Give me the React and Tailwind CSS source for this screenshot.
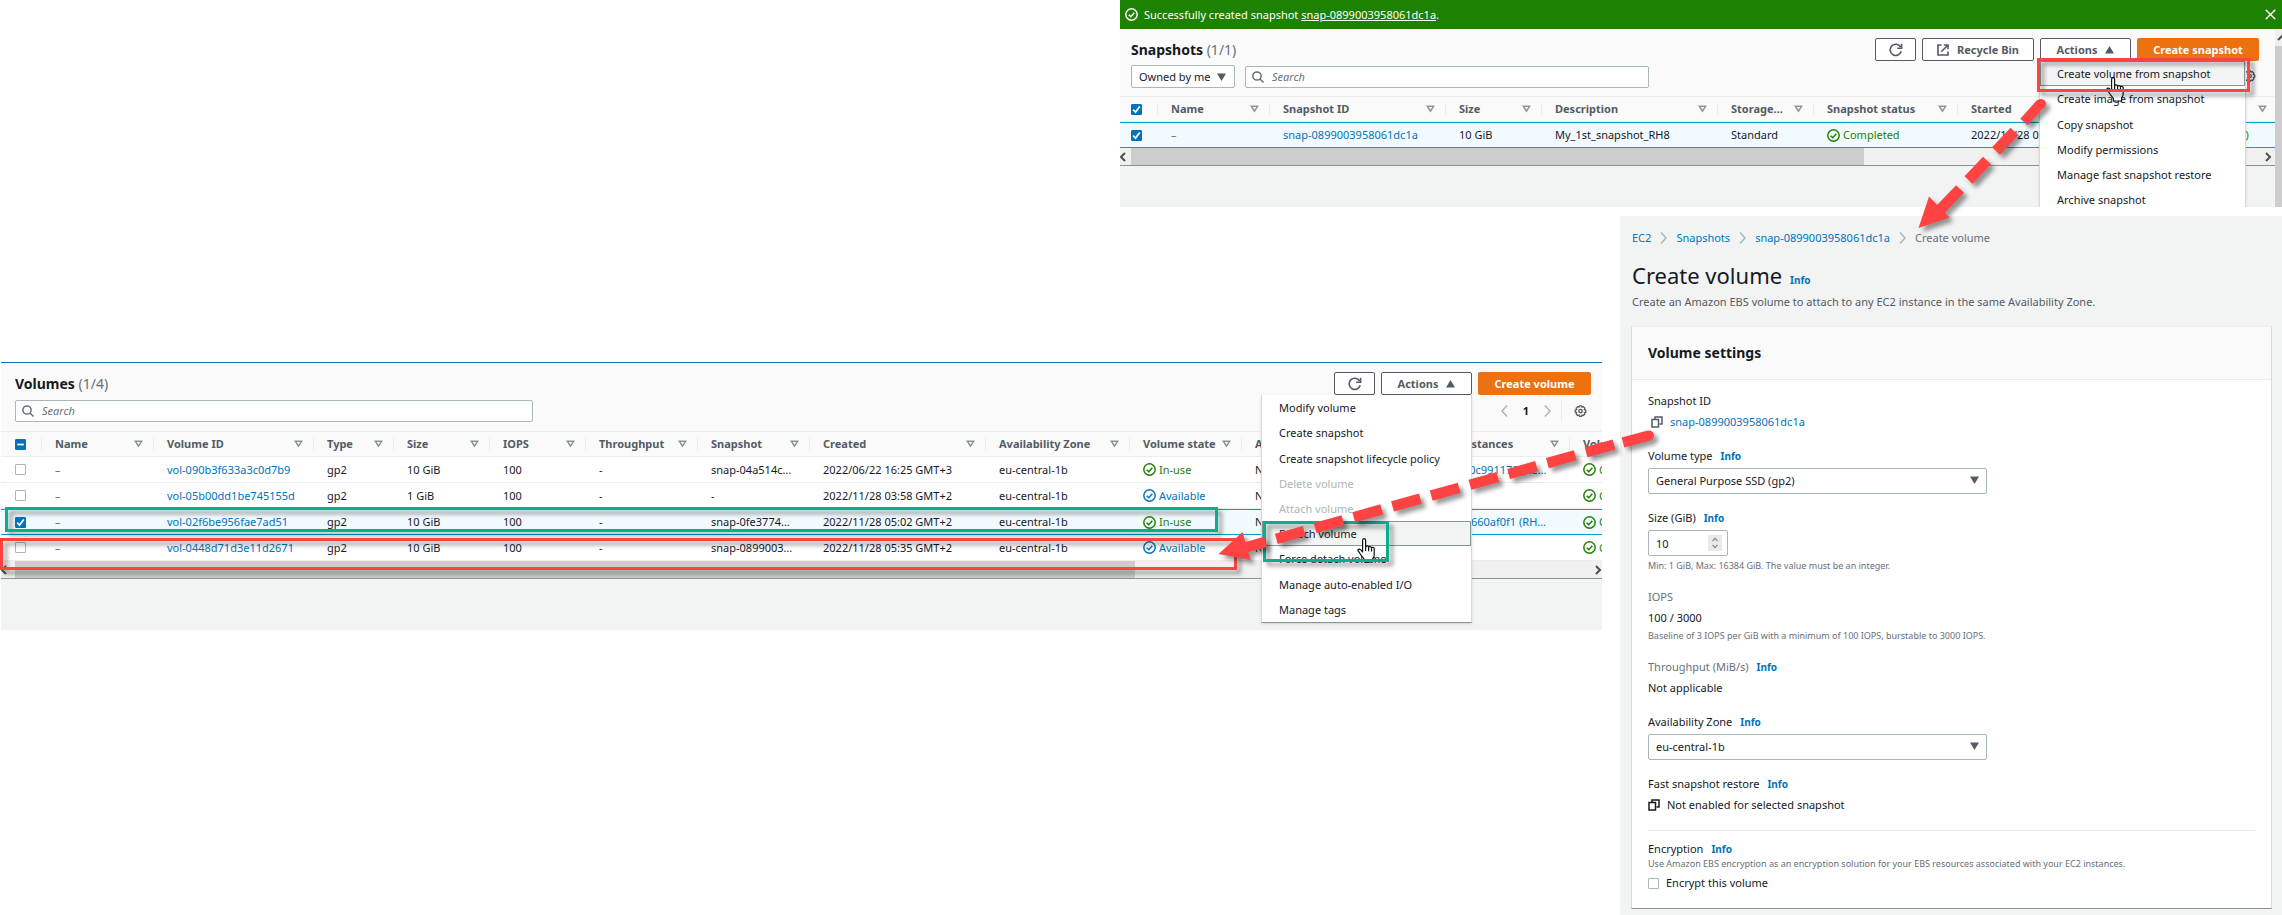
import React from "react";

const LINK = "text-[#0073bb] hover:underline";

function CheckCircle({ className = "" }) {
  return (
    <svg viewBox="0 0 16 16" className={`size-[13px] shrink-0 ${className}`} fill="none" stroke="currentColor" strokeWidth="1.8" aria-hidden="true">
      <circle cx="8" cy="8" r="7" />
      <path d="M4.6 8.2l2.5 2.5 4.4-4.9" />
    </svg>
  );
}

function SortIcon() {
  return (
    <svg viewBox="0 0 9 8" className="h-2 w-[9px] shrink-0" fill="none" stroke="#879596" strokeWidth="1.5" aria-hidden="true">
      <path d="M1.3 1.2h6.4L4.5 6.2z" />
    </svg>
  );
}

function Triangle({ up = false, className = "" }) {
  return (
    <svg viewBox="0 0 9 8" className={`h-2 w-[9px] shrink-0 ${className}`} fill="#545b64" aria-hidden="true">
      <path d={up ? "M0 7.5h9L4.5 0z" : "M0 0.5h9L4.5 8z"} />
    </svg>
  );
}

function SearchIcon() {
  return (
    <svg viewBox="0 0 12 12" className="pointer-events-none size-3 shrink-0" fill="none" stroke="#687078" strokeWidth="1.5" aria-hidden="true">
      <circle cx="5" cy="5" r="4.1" />
      <path d="M8 8l3.5 3.5" />
    </svg>
  );
}

function RefreshIcon() {
  return (
    <svg viewBox="0 0 14 14" className="size-[14px]" fill="none" stroke="#545b64" strokeWidth="1.6" aria-hidden="true">
      <path d="M12.2 8.2A5.6 5.6 0 1 1 11.6 4" />
      <path d="M12.6 0.8v4.4H8.2" />
    </svg>
  );
}

function ExternalIcon() {
  return (
    <svg viewBox="0 0 12 12" className="size-3" fill="none" stroke="#545b64" strokeWidth="1.6" aria-hidden="true">
      <path d="M4.5 1H1v10h10V7.5" />
      <path d="M6.8 1H11v4.2M11 1L4.2 7.8" />
    </svg>
  );
}

function GearIcon() {
  return (
    <svg viewBox="0 0 16 16" className="size-[13px]" fill="none" stroke="#545b64" strokeWidth="1.6" strokeLinejoin="round" aria-hidden="true">
      <path d="M6.7 1h2.6l.5 1.700 1.700-.7 1.900 1.900-.7 1.700 1.800.6v2.600l-1.800.6.7 1.700-1.900 1.900-1.700-.7-.5 1.700H6.700l-.5-1.700-1.700.7-1.900-1.900.7-1.700-1.800-.6V6.200l1.800-.6-.7-1.700 1.900-1.900 1.700.7z" />
      <circle cx="8" cy="7.500" r="2.200" />
    </svg>
  );
}

function CopyIcon({ className = "" }) {
  return (
    <svg viewBox="0 0 12 12" className={`size-3 shrink-0 ${className}`} fill="none" stroke="currentColor" strokeWidth="1.5" aria-hidden="true">
      <path d="M4 3V1h7v7H8.500" />
      <path d="M1 3.500h6.500V11H1z" />
    </svg>
  );
}

function Chevron({ left = false, className = "" }) {
  return (
    <svg viewBox="0 0 7 12" className={`h-3 w-[7px] shrink-0 ${className}`} fill="none" stroke="currentColor" strokeWidth="1.500" aria-hidden="true">
      <path d={left ? "M6 0.500L1 6l5 5.500" : "M1 0.500L6 6l-5 5.500"} />
    </svg>
  );
}

function HandCursor({ className = "" }) {
  return (
    <svg viewBox="0 0 20 25" className={`pointer-events-none h-[25px] w-5 ${className}`} fill="#fff" stroke="#111" strokeWidth="1.200" strokeLinejoin="round" aria-hidden="true">
      <path d="M5.600 2.200c0-2 3-2 3 0V9c.2-1.500 3-1.400 3 .4.300-1.300 2.900-1.100 2.900.7.400-1.200 2.700-.9 2.700.9v6.200c0 1.500-.9 2.500-1.600 3.800V24H7.400v-2.500C5.700 19.300 4 17.300 2.800 15.300 1.900 14 .9 12.900.9 12c.5-1.500 2.300-1 3.200.1l1.500 1.900z" />
      <path d="M8.600 9v4M11.600 9.500v3.700M14.500 10.200v3.200" fill="none" />
    </svg>
  );
}

function Checkbox({ checked = false, mixed = false, label, id }) {
  return (
    <span className="relative block size-[11px]">
      <input
        type="checkbox"
        id={id}
        aria-label={label}
        defaultChecked={checked || mixed}
        className="peer block size-[11px] appearance-none rounded-[1px] border border-[#aab7b8] bg-white checked:border-[#0073bb] checked:bg-[#0073bb]"
      />
      <svg viewBox="0 0 11 11" className="pointer-events-none absolute inset-0 hidden peer-checked:block" fill="none" stroke="#fff" strokeWidth="1.700" aria-hidden="true">
        <path d={mixed ? "M2.200 5.500h6.600" : "M2.200 5.600l2.300 2.500 4.300-5.600"} />
      </svg>
    </span>
  );
}

function Button({ children, className = "", ...rest }) {
  return (
    <button type="button" className={`flex h-[23px] items-center justify-center gap-2 rounded-[2px] border border-[#545b64] bg-white text-[11px] font-bold text-[#545b64] ${className}`} {...rest}>
      {children}
    </button>
  );
}

function PrimaryButton({ children, className = "" }) {
  return (
    <button type="button" className={`h-[23px] rounded-[2px] bg-[#ec7211] text-[11px] font-bold text-white ${className}`}>
      {children}
    </button>
  );
}

function SearchBox({ label, className = "" }) {
  return (
    <label className={`flex h-[22px] items-center gap-2 rounded-[2px] border border-[#aab7b8] bg-white px-[6px] ${className}`}>
      <SearchIcon />
      <input type="search" aria-label={label} placeholder="Search" className="min-w-0 flex-1 bg-transparent outline-none placeholder:italic placeholder:text-[#687078]" />
    </label>
  );
}

function Menu({ items, active, disabled = [], className = "" }) {
  return (
    <ul role="menu" className={`absolute z-10 border border-t-0 border-[#d5dbdb] border-b-[#879596] bg-white shadow-sm ${className}`}>
      {items.map((item, i) => (
        <li key={item} role="none" className="nth-[5n+3]:pt-px">
          <button
            type="button"
            role="menuitem"
            disabled={disabled.includes(i)}
            className={`flex h-[25px] w-full items-center border px-4 text-left ${
              i === active ? "border-[#879596] bg-[#f2f3f3]" : "border-transparent"
            } ${disabled.includes(i) ? "text-[#aab7b8]" : "text-[#16191f]"}`}
          >
            {item}
          </button>
        </li>
      ))}
    </ul>
  );
}

function Status({ color, children }) {
  return (
    <span className={`flex items-center gap-[3px] ${color}`}>
      <CheckCircle />
      {children}
    </span>
  );
}

function HeaderCell({ children }) {
  return (
    <th scope="col" className="h-[25px] border-b border-[#eaeded] p-0 text-left font-bold text-[#545b64]">
      <div className="flex h-3 items-center justify-between border-r border-[#eaeded] pl-[13px] pr-[10px]">
        <span className="whitespace-nowrap leading-3">{children}</span>
        <SortIcon />
      </div>
    </th>
  );
}

function Scrollbar({ thumb, end }) {
  return (
    <div className="flex h-[17px] items-center bg-[#f0f0f0] text-[#505050]">
      <svg viewBox="0 0 10 10" className="mr-1 h-[10px] w-[10px]" fill="none" stroke="currentColor" strokeWidth="2" aria-hidden="true">
        <path d="M5 1L1 5l4 4" />
      </svg>
      <div className={`h-full bg-[#cdcdcd] ${thumb}`} />
      <svg viewBox="0 0 10 10" className={`ml-auto h-[10px] w-[10px] ${end}`} fill="none" stroke="currentColor" strokeWidth="2" aria-hidden="true">
        <path d="M4 1l4 4-4 4" />
      </svg>
    </div>
  );
}

function Highlight({ color, className = "" }) {
  return <div className={`pointer-events-none absolute z-20 border-[3px] drop-shadow-[4px_4px_2px_rgba(0,0,0,0.4)] ${color} ${className}`} />;
}

function SnapshotsPanel() {
  const cell = "h-[26px] border-y border-[#00a1c9] bg-[#f1faff] p-0 pl-[13px] whitespace-nowrap";
  return (
    <section className="relative ml-auto w-[1162px] overflow-hidden bg-[#f2f3f3]">
      <div className="flex h-[29px] items-center gap-[6px] bg-[#1d8102] pl-[5px] pr-[6px] text-white">
        <CheckCircle />
        <p className="flex-1">
          Successfully created snapshot <a href="#snapshot" className="underline">snap-0899003958061dc1a</a>.
        </p>
        <button type="button" aria-label="Dismiss">
          <svg viewBox="0 0 11 11" className="size-[11px]" stroke="currentColor" strokeWidth="1.400" aria-hidden="true">
            <path d="M0.700 0.700l9.600 9.600M10.300 0.700L0.700 10.300" />
          </svg>
        </button>
      </div>
      <div className="flex">
        <div className="min-w-0 flex-1 pb-[41px]">
          <header className="flex flex-col gap-1 border-b border-[#eaeded] bg-[#fafafa] pb-2 pl-[11px] pr-4 pt-[9px]">
            <div className="flex items-center gap-[6px]">
              <h2 className="mr-auto text-[14px] font-bold leading-5">
                Snapshots <span className="font-normal text-[#687078]">(1/1)</span>
              </h2>
              <Button aria-label="Refresh" className="w-[41px]"><RefreshIcon /></Button>
              <Button className="w-28"><ExternalIcon />Recycle Bin</Button>
              <div className="relative">
                <Button className="w-[91px]">Actions<Triangle up /></Button>
                <Menu
                  className="-left-px top-full w-[207px]"
                  active={0}
                  items={["Create volume from snapshot", "Create image from snapshot", "Copy snapshot", "Modify permissions", "Manage fast snapshot restore", "Archive snapshot"]}
                />
                <HandCursor className="absolute left-[66px] top-[39px] z-10" />
                <Highlight color="border-[#ff4343]" className="-left-[3px] top-5 h-[34px] w-[213px]" />
              </div>
              <PrimaryButton className="w-[122px]">Create snapshot</PrimaryButton>
            </div>
            <div className="flex items-center gap-[10px]">
              <div className="relative">
                <select aria-label="Owner filter" className="h-[23px] w-[104px] appearance-none rounded-[2px] border border-[#aab7b8] bg-white pl-[7px]">
                  <option>Owned by me</option>
                </select>
                <Triangle className="pointer-events-none absolute right-[9px] top-2" />
              </div>
              <SearchBox label="Search snapshots" className="w-[404px]" />
              <button type="button" aria-label="Preferences" className="ml-auto mr-[3px]"><GearIcon /></button>
            </div>
          </header>
          <div className="overflow-hidden">
            <table className="w-[1158px] table-fixed border-separate border-spacing-0">
              <colgroup>
                <col className="w-[38px]" />
                <col className="w-[112px]" />
                <col className="w-[176px]" />
                <col className="w-[96px]" />
                <col className="w-[176px]" />
                <col className="w-[96px]" />
                <col className="w-[144px]" />
                <col className="w-[178px]" />
                <col className="w-[142px]" />
              </colgroup>
              <thead className="bg-[#fafafa]">
                <tr>
                  <th scope="col" className="h-[25px] border-b border-[#eaeded] p-0">
                    <div className="flex h-3 items-center border-r border-[#eaeded] pl-[11px]">
                      <Checkbox checked label="Select all snapshots" />
                    </div>
                  </th>
                  {["Name", "Snapshot ID", "Size", "Description", "Storage…", "Snapshot status", "Started", "Progress"].map((h) => (
                    <HeaderCell key={h}>{h}</HeaderCell>
                  ))}
                </tr>
              </thead>
              <tbody>
                <tr>
                  <td className="h-[26px] border-y border-[#00a1c9] bg-[#f1faff] p-0 pl-[11px]"><Checkbox checked label="Select snapshot" /></td>
                  <td className={`${cell} text-[#687078]`}>–</td>
                  <td className={cell}><a href="#snapshot" className={LINK}>snap-0899003958061dc1a</a></td>
                  <td className={cell}>10 GiB</td>
                  <td className={cell}>My_1st_snapshot_RH8</td>
                  <td className={cell}>Standard</td>
                  <td className={cell}><Status color="text-[#1d8102]">Completed</Status></td>
                  <td className={cell}>2022/11/28 05:26</td>
                  <td className={cell}><Status color="text-[#1d8102]">Available (100%)</Status></td>
                </tr>
              </tbody>
            </table>
          </div>
          <div className="border-b border-[#879596]">
            <Scrollbar thumb="ml-[-3px] w-[733px]" end="mr-[3px]" />
          </div>
        </div>
        <div className="flex w-[7px] flex-col bg-[#cdcdcd]">
          <div className="h-[17px] overflow-hidden bg-[#f0f0f0] text-[#505050]">
            <svg viewBox="0 0 10 17" className="ml-[2px] h-[17px] w-[10px]" fill="none" stroke="currentColor" strokeWidth="2" aria-hidden="true">
              <path d="M1 11l4-4 4 4" />
            </svg>
          </div>
        </div>
      </div>
    </section>
  );
}

const VOLUMES = [
  { id: "vol-090b3f633a3c0d7b9", size: "10 GiB", snap: "snap-04a514c…", created: "2022/06/22 16:25 GMT+3", used: true, inst: "i-0a7cde4140c991172 (Re…" },
  { id: "vol-05b00dd1be745155d", size: "1 GiB", snap: "-", created: "2022/11/28 03:58 GMT+2", used: false, inst: "" },
  { id: "vol-02f6be956fae7ad51", size: "10 GiB", snap: "snap-0fe3774…", created: "2022/11/28 05:02 GMT+2", used: true, inst: "i-03b1d2947660af0f1 (RH…", selected: true },
  { id: "vol-0448d71d3e11d2671", size: "10 GiB", snap: "snap-0899003…", created: "2022/11/28 05:35 GMT+2", used: false, inst: "" },
];

function VolumesPanel() {
  return (
    <section className="relative ml-px mt-[146px] min-w-0 flex-1 self-start border-t border-[#0073bb] bg-[#f2f3f3] pb-[51px]">
      <header className="flex flex-col gap-[5px] border-b border-[#eaeded] bg-[#fafafa] pb-[9px] pl-[14px] pr-[11px] pt-[9px]">
        <div className="flex items-center gap-[6px]">
          <h2 className="mr-auto text-[14px] font-bold leading-5">
            Volumes <span className="font-normal text-[#687078]">(1/4)</span>
          </h2>
          <Button aria-label="Refresh" className="w-[41px]"><RefreshIcon /></Button>
          <div className="relative">
            <Button className="w-[91px]">Actions<Triangle up /></Button>
            <Menu
              className="right-0 top-full w-[211px]"
              active={5}
              disabled={[3, 4]}
              items={["Modify volume", "Create snapshot", "Create snapshot lifecycle policy", "Delete volume", "Attach volume", "Detach volume", "Force detach volume", "Manage auto-enabled I/O", "Manage tags"]}
            />
            <HandCursor className="absolute -left-6 top-[166px] z-10" />
            <Highlight color="border-[#0aad8e]" className="right-[83px] top-[149px] h-[41px] w-[126px]" />
          </div>
          <PrimaryButton className="w-[113px]">Create volume</PrimaryButton>
        </div>
        <div className="flex items-center">
          <SearchBox label="Search volumes" className="w-[518px]" />
          <div className="ml-auto flex items-center text-[#aab7b8]">
            <button type="button" aria-label="Previous page"><Chevron left /></button>
            <span className="w-9 text-center font-bold text-[#16191f]">1</span>
            <button type="button" aria-label="Next page"><Chevron /></button>
            <button type="button" aria-label="Preferences" className="ml-[10px] flex h-[22px] items-center border-l border-[#eaeded] pl-3 pr-1"><GearIcon /></button>
          </div>
        </div>
      </header>
      <div className="overflow-hidden">
        <table className="w-[1681px] table-fixed border-separate border-spacing-0 bg-white">
          <colgroup>
            <col className="w-[41px]" />
            <col className="w-[112px]" />
            <col className="w-[160px]" />
            <col className="w-[80px]" />
            <col className="w-[96px]" />
            <col className="w-[96px]" />
            <col className="w-[112px]" />
            <col className="w-[112px]" />
            <col className="w-[176px]" />
            <col className="w-[144px]" />
            <col className="w-[112px]" />
            <col className="w-[152px]" />
            <col className="w-[176px]" />
            <col className="w-[112px]" />
          </colgroup>
          <thead className="bg-[#fafafa]">
            <tr>
              <th scope="col" className="h-[25px] border-b border-[#eaeded] p-0">
                <div className="flex h-3 items-center border-r border-[#eaeded] pl-[14px]">
                  <Checkbox mixed label="Select all volumes" />
                </div>
              </th>
              {["Name", "Volume ID", "Type", "Size", "IOPS", "Throughput", "Snapshot", "Created", "Availability Zone", "Volume state", "Alarm status", "Attached Instances", "Volume status"].map((h) => (
                <HeaderCell key={h}>{h}</HeaderCell>
              ))}
            </tr>
          </thead>
          <tbody>
            {VOLUMES.map((v) => {
              const line = v.selected ? "border-y border-[#00a1c9] bg-[#f1faff]" : "border-b border-[#eaeded]";
              const cell = `h-[26px] p-0 pl-[13px] whitespace-nowrap ${line}`;
              return (
                <tr key={v.id}>
                  <td className={`h-[26px] p-0 pl-[14px] ${line}`}><Checkbox checked={v.selected} label={`Select ${v.id}`} /></td>
                  <td className={`${cell} text-[#687078]`}>–</td>
                  <td className={cell}><a href={`#${v.id}`} className={LINK}>{v.id}</a></td>
                  <td className={cell}>gp2</td>
                  <td className={cell}>{v.size}</td>
                  <td className={cell}>100</td>
                  <td className={cell}>-</td>
                  <td className={cell}>{v.snap}</td>
                  <td className={cell}>{v.created}</td>
                  <td className={cell}>eu-central-1b</td>
                  <td className={cell}>
                    {v.used ? <Status color="text-[#1d8102]">In-use</Status> : <Status color="text-[#0073bb]">Available</Status>}
                  </td>
                  <td className={cell}>No alarms</td>
                  <td className={cell}><a href="#instance" className={LINK}>{v.inst}</a></td>
                  <td className={cell}><Status color="text-[#1d8102]">Okay</Status></td>
                </tr>
              );
            })}
          </tbody>
        </table>
      </div>
      <div className="border-b border-[#879596]">
        <Scrollbar thumb="w-[1120px]" end="" />
      </div>
      <Highlight color="border-[#0aad8e]" className="left-1 top-36 h-[25px] w-[1213px]" />
      <Highlight color="border-[#ff4343]" className="-left-px top-[175px] h-8 w-[1237px]" />
    </section>
  );
}

function Info() {
  return <a href="#info" className="text-[10px] font-bold text-[#0073bb]">Info</a>;
}

function FieldLabel({ htmlFor, muted = false, info = true, children }) {
  const Tag = htmlFor ? "label" : "span";
  return (
    <div className={`flex h-4 items-center gap-2 ${muted ? "text-[#687078]" : ""}`}>
      <Tag htmlFor={htmlFor}>{children}</Tag>
      {info && <Info />}
    </div>
  );
}

function SelectField({ id, value }) {
  return (
    <div className="relative mt-1 w-[339px]">
      <select id={id} className="block h-[26px] w-full appearance-none rounded-[2px] border border-[#aab7b8] bg-white pl-[7px]">
        <option>{value}</option>
      </select>
      <Triangle className="pointer-events-none absolute right-2 top-2" />
    </div>
  );
}

function CreateVolumePanel() {
  const hint = "text-[9px] leading-[14px] text-[#687078]";
  return (
    <section className="w-[662px] shrink-0 bg-[#f2f3f3] pb-[7px] pl-[11px] pr-[10px] pt-3">
      <div className="pl-px">
        <nav aria-label="Breadcrumb" className="flex h-5 items-center gap-[9px] text-[#aab7b8]">
          <a href="#ec2" className={LINK}>EC2</a>
          <Chevron />
          <a href="#snapshots" className={LINK}>Snapshots</a>
          <Chevron />
          <a href="#snapshot" className={LINK}>snap-0899003958061dc1a</a>
          <Chevron />
          <span className="text-[#687078]">Create volume</span>
        </nav>
        <div className="mt-[11px] flex h-8 items-baseline gap-2">
          <h1 className="text-[22px] leading-8">Create volume</h1>
          <Info />
        </div>
        <p className="mt-px h-5 leading-5 text-[#545b64]">Create an Amazon EBS volume to attach to any EC2 instance in the same Availability Zone.</p>
      </div>

      <div className="mt-[14px] border border-[#d5dbdb] border-b-[#879596] border-t-[#eaeded] bg-white">
        <h2 className="flex h-[53px] items-center border-b border-[#eaeded] bg-[#fafafa] px-4 text-[14px] font-bold">Volume settings</h2>
        <div className="px-4 pb-[17px] pt-[13px]">
          <FieldLabel info={false}>Snapshot ID</FieldLabel>
          <div className="mt-[3px] flex h-5 items-center gap-[7px] pl-[3px]">
            <CopyIcon className="text-[#545b64]" />
            <a href="#snapshot" className={LINK}>snap-0899003958061dc1a</a>
          </div>

          <div className="mt-4">
            <FieldLabel htmlFor="volume-type">Volume type</FieldLabel>
            <SelectField id="volume-type" value="General Purpose SSD (gp2)" />
          </div>

          <div className="mt-4">
            <FieldLabel htmlFor="size">Size (GiB)</FieldLabel>
            <div className="relative mt-1 w-20">
              <input
                id="size"
                type="number"
                defaultValue={10}
                className="block h-[26px] w-full rounded-[2px] border border-[#aab7b8] bg-white pl-[7px] [appearance:textfield]"
              />
              <span className="pointer-events-none absolute right-[6px] top-[5px] flex h-4 w-[14px] items-center justify-center bg-[#e9e9ed]">
                <svg viewBox="0 0 8 12" className="h-3 w-2" fill="none" stroke="#8f8f9d" strokeWidth="1.300" aria-hidden="true">
                  <path d="M1.500 4L4 1.500 6.500 4M1.500 8L4 10.500 6.500 8" />
                </svg>
              </span>
            </div>
            <p className={`mt-[3px] ${hint}`}>Min: 1 GiB, Max: 16384 GiB. The value must be an integer.</p>
          </div>

          <div className="mt-4">
            <FieldLabel muted info={false}>IOPS</FieldLabel>
            <p className="mt-[3px] h-5 leading-5">100 / 3000</p>
            <p className={`mt-px ${hint}`}>Baseline of 3 IOPS per GiB with a minimum of 100 IOPS, burstable to 3000 IOPS.</p>
          </div>

          <div className="mt-4">
            <FieldLabel muted>Throughput (MiB/s)</FieldLabel>
            <p className="mt-[3px] h-5 leading-5">Not applicable</p>
          </div>

          <div className="mt-4">
            <FieldLabel htmlFor="zone">Availability Zone</FieldLabel>
            <SelectField id="zone" value="eu-central-1b" />
          </div>

          <div className="mt-4">
            <FieldLabel>Fast snapshot restore</FieldLabel>
            <p className="mt-[3px] flex h-5 items-center gap-[7px]">
              <CopyIcon />
              Not enabled for selected snapshot
            </p>
          </div>

          <hr className="mb-[10px] mt-[15px] border-[#eaeded]" />

          <FieldLabel>Encryption</FieldLabel>
          <p className={hint}>Use Amazon EBS encryption as an encryption solution for your EBS resources associated with your EC2 instances.</p>
          <div className="mt-1 flex h-4 items-center gap-[7px]">
            <Checkbox id="encrypt" label="Encrypt this volume" />
            <label htmlFor="encrypt">Encrypt this volume</label>
          </div>
        </div>
      </div>
    </section>
  );
}

function Arrows() {
  return (
    <svg
      viewBox="1212 0 1070 600"
      className="pointer-events-none absolute right-0 top-0 z-30 h-[600px] w-[1070px] drop-shadow-[4px_4px_2px_rgba(0,0,0,0.4)]"
      fill="#ff4343"
      stroke="#ff4343"
      aria-hidden="true"
    >
      <g strokeWidth="11">
        <path d="M2041 103L2024 122" strokeWidth="10" />
        <circle cx="2041" cy="104" r="5" stroke="none" />
        <path d="M2014.500 131.500L1996 151M1987 160.500L1968.500 180M1960 189L1936 214" />
      </g>
      <path d="M1918.500 228L1929 196.500L1949.500 217.500z" stroke="none" />
      <g strokeWidth="10.500">
        <path d="M1649 435.500L1623 442.500" />
        <circle cx="1649" cy="435.500" r="5" stroke="none" />
        <path d="M1614 444.500L1240 549" strokeDasharray="29 11.200" />
      </g>
      <path d="M1218.500 554L1242.500 532L1250.500 560z" stroke="none" />
    </svg>
  );
}

export default function App() {
  return (
    <main className="relative min-h-screen overflow-hidden bg-white font-['Noto_Sans',sans-serif] text-[11px] leading-4 text-[#16191f]">
      <SnapshotsPanel />
      <div className="mt-[9px] flex gap-[18px]">
        <VolumesPanel />
        <CreateVolumePanel />
      </div>
      <Arrows />
    </main>
  );
}
